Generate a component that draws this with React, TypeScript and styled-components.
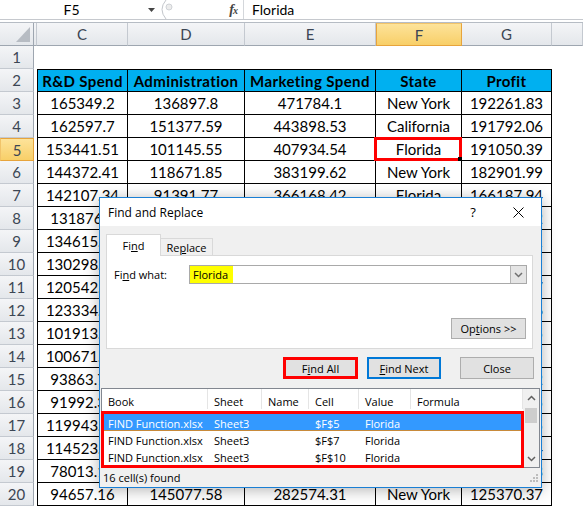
import React from 'react';
import styled, { createGlobalStyle, css } from 'styled-components';

const GlobalStyle = createGlobalStyle`
  html, body { margin: 0; padding: 0; background: #fff; }
  body { overflow: hidden; }
`;

const COLS = '34px 3px 91px 117px 131px 86px 90px 1fr';
const UI_FONT = `"Open Sans", "Noto Sans", "Liberation Sans", sans-serif`;

const Page = styled.div`
  position: relative;
  width: 583px;
  height: 507px;
  overflow: hidden;
  background: #fff;
  font-family: Lato, "Liberation Sans", sans-serif;
`;

/* ---------- formula bar ---------- */
const FormulaBar = styled.div`
  display: flex;
  height: 19px;
  border-bottom: 1px solid #c6c9ce;
  background: #fff;
`;
const NameBox = styled.div`
  width: 143px;
  display: flex;
  align-items: center;
  justify-content: center;
  font-size: 14px;
  color: #000;
`;
const NameArrow = styled.div`
  width: 16px;
  display: flex;
  align-items: center;
  justify-content: center;
`;
const FxZone = styled.div`
  width: 85px;
  display: flex;
  align-items: center;
  justify-content: space-between;
  box-sizing: border-box;
  padding-right: 6px;
  border-right: 1px solid #d4d7db;
`;
const FxLabel = styled.span`
  font-family: "Liberation Serif", serif;
  font-style: italic;
  font-weight: 700;
  font-size: 14px;
  color: #444;
  letter-spacing: -1px;
  & small { font-size: 10px; }
`;
const FormulaText = styled.div`
  display: flex;
  align-items: center;
  padding-left: 8px;
  font-size: 14px;
  color: #000;
`;
const Splitter = styled.div`
  height: 2px;
  background: #fff;
  border-bottom: 1px solid #b6bcc4;
`;

/* ---------- sheet ---------- */
const SheetRow = styled.div`
  display: grid;
  grid-template-columns: ${COLS};
  height: 23px;
`;
const headerBg = css`
  background: linear-gradient(#f4f5f7, #e4e7eb);
`;
const activeBg = css`
  background: linear-gradient(#fde39a, #f8cf68);
`;
const Corner = styled.div`
  box-sizing: border-box;
  ${headerBg};
  border-right: 1px solid #9ea6b0;
  border-bottom: 1px solid #9ea6b0;
  display: flex;
  align-items: flex-end;
  justify-content: flex-end;
  padding: 0 3px 3px 0;
`;
const ColHeader = styled.div<{ $active?: boolean }>`
  box-sizing: border-box;
  ${headerBg};
  border-right: 1px solid #c4c9d0;
  border-bottom: 1px solid #9ea6b0;
  display: flex;
  align-items: center;
  justify-content: center;
  font-size: 15px;
  color: #3c4654;
  ${(p) =>
    p.$active &&
    css`
      ${activeBg};
      border: 1px solid #e7a43c;
      border-top-color: #f1c46a;
    `}
`;
const RowHeader = styled.div<{ $active?: boolean }>`
  box-sizing: border-box;
  ${headerBg};
  border-right: 1px solid #9ea6b0;
  border-bottom: 1px solid #c4c9d0;
  display: flex;
  align-items: center;
  justify-content: center;
  font-size: 15px;
  color: #3c4654;
  ${(p) =>
    p.$active &&
    css`
      ${activeBg};
      border: 1px solid #e7a43c;
      border-left-color: #f1c46a;
    `}
`;
const Sliver = styled.div<{ $head?: boolean }>`
  box-sizing: border-box;
  ${(p) =>
    p.$head &&
    css`
      ${headerBg};
      border-right: 1px solid #c4c9d0;
      border-bottom: 1px solid #9ea6b0;
    `}
`;
const Cell = styled.div<{ $head?: boolean; $first?: boolean; $top?: boolean }>`
  position: relative;
  box-sizing: border-box;
  border-right: 1px solid #000;
  border-bottom: 1px solid #000;
  ${(p) => p.$first && 'border-left: 1px solid #000;'}
  ${(p) => p.$top && 'border-top: 1px solid #000;'}
  display: flex;
  align-items: center;
  justify-content: center;
  white-space: nowrap;
  font-size: 15px;
  color: #000;
  background: ${(p) => (p.$head ? '#00b0f0' : '#fff')};
  font-weight: ${(p) => (p.$head ? 700 : 400)};
  letter-spacing: ${(p) => (p.$head ? '0.4px' : '0')};
`;
const EmptyCell = styled.div``;
const Marker = styled.div`
  position: absolute;
  left: -2px;
  top: -1px;
  right: -1px;
  bottom: -1px;
  border: 3px solid #ff0000;
`;
const FillHandle = styled.div`
  position: absolute;
  right: -3px;
  bottom: -3px;
  width: 4px;
  height: 4px;
  background: #000;
`;

/* ---------- dialog ---------- */
const Dialog = styled.div`
  position: absolute;
  left: 99px;
  top: 197px;
  width: 443px;
  height: 291px;
  box-sizing: border-box;
  border: 1px solid #1a7fd4;
  background: #f0f0f0;
  box-shadow: 0 2px 14px rgba(0, 0, 0, 0.3);
  display: flex;
  flex-direction: column;
  font-family: ${UI_FONT};
  font-size: 11px;
  color: #000;
`;
const TitleBar = styled.div`
  height: 28px;
  background: #fff;
  display: flex;
  align-items: center;
  padding-left: 8px;
`;
const Title = styled.div`
  flex: 1;
  font-size: 12px;
`;
const TitleButton = styled.div<{ $w: number; $gap?: number }>`
  width: ${(p) => p.$w}px;
  margin-left: ${(p) => p.$gap ?? 0}px;
  height: 28px;
  display: flex;
  align-items: center;
  justify-content: center;
  font-size: 13px;
`;
const Body = styled.div`
  flex: 1;
  display: flex;
  flex-direction: column;
  padding-top: 8px;
`;
const TabRow = styled.div`
  display: flex;
  align-items: flex-end;
  height: 21px;
  padding-left: 6px;
  position: relative;
  z-index: 1;
`;
const Tab = styled.div<{ $active?: boolean }>`
  box-sizing: border-box;
  display: flex;
  align-items: center;
  justify-content: center;
  border: 1px solid #d9d9d9;
  border-bottom: none;
  ${(p) =>
    p.$active
      ? css`
          width: 55px;
          height: 22px;
          margin-bottom: -1px;
          background: #fff;
        `
      : css`
          width: 52px;
          height: 17px;
          border-left: none;
          background: #f0f0f0;
        `}
`;
const Panel = styled.div`
  height: 94px;
  box-sizing: border-box;
  margin: 0 8px 0 6px;
  border: 1px solid #d9d9d9;
  background: #fff;
  padding: 9px 5px 9px 7px;
  display: flex;
  flex-direction: column;
  justify-content: space-between;
`;
const FindRow = styled.div`
  display: flex;
  align-items: center;
  height: 19px;
`;
const Label = styled.div`
  width: 75px;
`;
const Combo = styled.div`
  flex: 1;
  height: 19px;
  box-sizing: border-box;
  border: 1px solid #a9a9a9;
  display: flex;
  align-items: stretch;
  background: #fff;
`;
const Highlight = styled.span`
  display: flex;
  align-items: center;
  background: #ffff00;
  padding: 0 5px 0 3px;
`;
const ComboButton = styled.div`
  margin-left: auto;
  width: 16px;
  box-sizing: border-box;
  background: #e5e5e5;
  border-left: 1px solid #b4b4b4;
  display: flex;
  align-items: center;
  justify-content: center;
`;
const OptionsRow = styled.div`
  display: flex;
  justify-content: flex-end;
  padding-right: 1px;
`;
const Button = styled.div<{ $variant?: 'red' | 'focus' | 'small'; $gap?: number }>`
  box-sizing: border-box;
  width: 74px;
  height: 22px;
  margin-left: ${(p) => p.$gap ?? 0}px;
  background: #e1e1e1;
  border: 1px solid #adadad;
  display: flex;
  align-items: center;
  justify-content: center;
  ${(p) => p.$variant === 'red' && 'border: 3px solid #ff0000; width: 75px;'}
  ${(p) => p.$variant === 'focus' && 'border: 2px solid #0078d7;'}
  ${(p) => p.$variant === 'small' && 'width: 75px; height: 21px;'}
`;
const ButtonRow = styled.div`
  display: flex;
  justify-content: flex-end;
  padding-right: 7px;
  margin-top: 8px;
`;
const Results = styled.div`
  position: relative;
  height: 80px;
  margin: 9px 1px 0 1px;
  box-sizing: border-box;
  border: 1px solid #828790;
  background: #fff;
  display: flex;
`;
const ResultsMain = styled.div`
  flex: 1;
  display: flex;
  flex-direction: column;
`;
const ListGrid = styled.div<{ $selected?: boolean }>`
  display: grid;
  grid-template-columns: 106px 54px 47px 50px 52px 1fr;
  height: 17px;
  align-items: center;
  ${(p) =>
    p.$selected &&
    css`
      background: #3399ff;
      color: #fff;
      box-shadow: inset 0 -1px 0 #c88a3a;
    `}
`;
const HeaderGrid = styled(ListGrid)`
  height: 20px;
  align-items: stretch;
  margin-bottom: 5px;
`;
const HeaderCell = styled.div`
  display: flex;
  align-items: center;
  padding: 5px 0 0 6px;
  border-right: 1px solid #e5e5e5;
  color: #000;
`;
const ListCell = styled.div`
  padding: 2px 0 0 6px;
  white-space: nowrap;
`;
const ScrollBar = styled.div`
  width: 16px;
  background: #f0f0f0;
  display: flex;
  flex-direction: column;
`;
const ScrollArrow = styled.div`
  height: 17px;
  display: flex;
  align-items: center;
  justify-content: center;
`;
const ScrollTrack = styled.div`
  flex: 1;
  padding: 2px 2px 0;
`;
const Thumb = styled.div`
  height: 15px;
  background: #cdcdcd;
`;
const RedFrame = styled.div`
  position: absolute;
  left: -1px;
  top: 22px;
  width: 423px;
  height: 57px;
  box-sizing: border-box;
  border: 3px solid #ff0000;
`;
const StatusBar = styled.div`
  flex: 1;
  display: flex;
  align-items: center;
  justify-content: space-between;
  padding: 0 3px 0 3px;
`;

const Chevron = ({ dir, color = '#606060' }: { dir: 'up' | 'down'; color?: string }) => (
  <svg width="9" height="6" viewBox="0 0 9 6">
    <polyline
      points={dir === 'up' ? '1,5 4.5,1.5 8,5' : '1,1 4.5,4.5 8,1'}
      fill="none"
      stroke={color}
      strokeWidth="1.5"
    />
  </svg>
);

const header = ['R&D Spend', 'Administration', 'Marketing Spend', 'State', 'Profit'];
const data: string[][] = [
  ['165349.2', '136897.8', '471784.1', 'New York', '192261.83'],
  ['162597.7', '151377.59', '443898.53', 'California', '191792.06'],
  ['153441.51', '101145.55', '407934.54', 'Florida', '191050.39'],
  ['144372.41', '118671.85', '383199.62', 'New York', '182901.99'],
  ['142107.34', '91391.77', '366168.42', 'Florida', '166187.94'],
  ['131876.9', '99814.71', '362861.36', 'New York', '156991.12'],
  ['134615.46', '147198.87', '127716.82', 'California', '156122.51'],
  ['130298.13', '145530.06', '323876.68', 'Florida', '155752.6'],
  ['120542.52', '148718.95', '311613.29', 'New York', '152211.77'],
  ['123334.88', '108679.17', '304981.62', 'California', '149759.96'],
  ['101913.08', '110594.11', '229160.95', 'Florida', '146121.95'],
  ['100671.96', '91790.61', '249744.55', 'California', '144259.4'],
  ['93863.75', '127320.38', '249839.44', 'Florida', '141585.52'],
  ['91992.39', '135495.07', '252664.93', 'California', '134307.35'],
  ['119943.24', '156547.42', '256512.92', 'Florida', '132602.65'],
  ['114523.61', '122616.84', '261776.23', 'New York', '129917.04'],
  ['78013.11', '121597.55', '264346.06', 'California', '126992.93'],
  ['94657.16', '145077.58', '282574.31', 'New York', '125370.37'],
];

/* rows 8..19, columns D..F lie entirely under the dialog */
const hidden = (rowNo: number, col: number) => rowNo >= 8 && rowNo <= 19 && col >= 1 && col <= 3;

const results = [
  ['FIND Function.xlsx', 'Sheet3', '', '$F$5', 'Florida', ''],
  ['FIND Function.xlsx', 'Sheet3', '', '$F$7', 'Florida', ''],
  ['FIND Function.xlsx', 'Sheet3', '', '$F$10', 'Florida', ''],
];

export default function App() {
  return (
    <Page>
      <GlobalStyle />
      <FormulaBar>
        <NameBox>F5</NameBox>
        <NameArrow>
          <svg width="7" height="4" viewBox="0 0 7 4">
            <polygon points="0,0 7,0 3.5,4" fill="#444" />
          </svg>
        </NameArrow>
        <FxZone>
          <svg width="20" height="19" viewBox="0 0 20 19">
            <path d="M7 0 Q-1 9.5 7 19" fill="none" stroke="#c3c6cb" strokeWidth="1" />
            <circle cx="10" cy="7" r="3" fill="#ececec" stroke="#cfd2d6" strokeWidth="1" />
          </svg>
          <FxLabel>
            f<small>x</small>
          </FxLabel>
        </FxZone>
        <FormulaText>Florida</FormulaText>
      </FormulaBar>
      <Splitter />

      <SheetRow>
        <Corner>
          <svg width="14" height="15" viewBox="0 0 14 15">
            <polygon points="14,0 14,15 0,15" fill="#b7bcc3" />
          </svg>
        </Corner>
        <Sliver $head />
        {['C', 'D', 'E', 'F', 'G', ''].map((c, i) => (
          <ColHeader key={i} $active={c === 'F'}>
            {c}
          </ColHeader>
        ))}
      </SheetRow>

      <SheetRow>
        <RowHeader>1</RowHeader>
        <Sliver />
        <EmptyCell />
      </SheetRow>

      <SheetRow>
        <RowHeader>2</RowHeader>
        <Sliver />
        {header.map((h, i) => (
          <Cell key={h} $head $top $first={i === 0}>
            {h}
          </Cell>
        ))}
        <EmptyCell />
      </SheetRow>

      {data.map((row, r) => {
        const rowNo = r + 3;
        return (
          <SheetRow key={r}>
            <RowHeader $active={rowNo === 5}>{rowNo}</RowHeader>
            <Sliver />
            {row.map((v, i) => (
              <Cell key={i} $first={i === 0}>
                {hidden(rowNo, i) ? '' : v}
                {rowNo === 5 && i === 3 && (
                  <Marker>
                    <FillHandle />
                  </Marker>
                )}
              </Cell>
            ))}
            <EmptyCell />
          </SheetRow>
        );
      })}

      <Dialog>
        <TitleBar>
          <Title>Find and Replace</Title>
          <TitleButton $w={24}>?</TitleButton>
          <TitleButton $w={45} $gap={11}>
            <svg width="11" height="11" viewBox="0 0 11 11">
              <path d="M0.5 0.5 L10.5 10.5 M10.5 0.5 L0.5 10.5" stroke="#000" strokeWidth="1" />
            </svg>
          </TitleButton>
        </TitleBar>
        <Body>
          <TabRow>
            <Tab $active>
              <span>
                Fi<u>n</u>d
              </span>
            </Tab>
            <Tab>
              <span>
                Re<u>p</u>lace
              </span>
            </Tab>
          </TabRow>
          <Panel>
            <FindRow>
              <Label>
                Fi<u>n</u>d what:
              </Label>
              <Combo>
                <Highlight>Florida</Highlight>
                <ComboButton>
                  <Chevron dir="down" color="#707070" />
                </ComboButton>
              </Combo>
            </FindRow>
            <OptionsRow>
              <Button $variant="small">
                <span>
                  Op<u>t</u>ions &gt;&gt;
                </span>
              </Button>
            </OptionsRow>
          </Panel>
          <ButtonRow>
            <Button $variant="red">
              <span>
                F<u>i</u>nd All
              </span>
            </Button>
            <Button $variant="focus" $gap={9}>
              <span>
                <u>F</u>ind Next
              </span>
            </Button>
            <Button $gap={19}>Close</Button>
          </ButtonRow>
          <Results>
            <ResultsMain>
              <HeaderGrid>
                {['Book', 'Sheet', 'Name', 'Cell', 'Value', 'Formula'].map((h) => (
                  <HeaderCell key={h}>{h}</HeaderCell>
                ))}
              </HeaderGrid>
              {results.map((r, i) => (
                <ListGrid key={i} $selected={i === 0}>
                  {r.map((v, j) => (
                    <ListCell key={j}>{v}</ListCell>
                  ))}
                </ListGrid>
              ))}
            </ResultsMain>
            <ScrollBar>
              <ScrollArrow>
                <Chevron dir="up" />
              </ScrollArrow>
              <ScrollTrack>
                <Thumb />
              </ScrollTrack>
              <ScrollArrow>
                <Chevron dir="down" />
              </ScrollArrow>
            </ScrollBar>
            <RedFrame />
          </Results>
          <StatusBar>
            <span>16 cell(s) found</span>
            <svg width="8" height="8" viewBox="0 0 8 8">
              {[
                [6, 0],
                [6, 3],
                [3, 3],
                [6, 6],
                [3, 6],
                [0, 6],
              ].map(([x, y], k) => (
                <rect key={k} x={x} y={y} width="2" height="2" fill="#bdbdbd" />
              ))}
            </svg>
          </StatusBar>
        </Body>
      </Dialog>
    </Page>
  );
}
